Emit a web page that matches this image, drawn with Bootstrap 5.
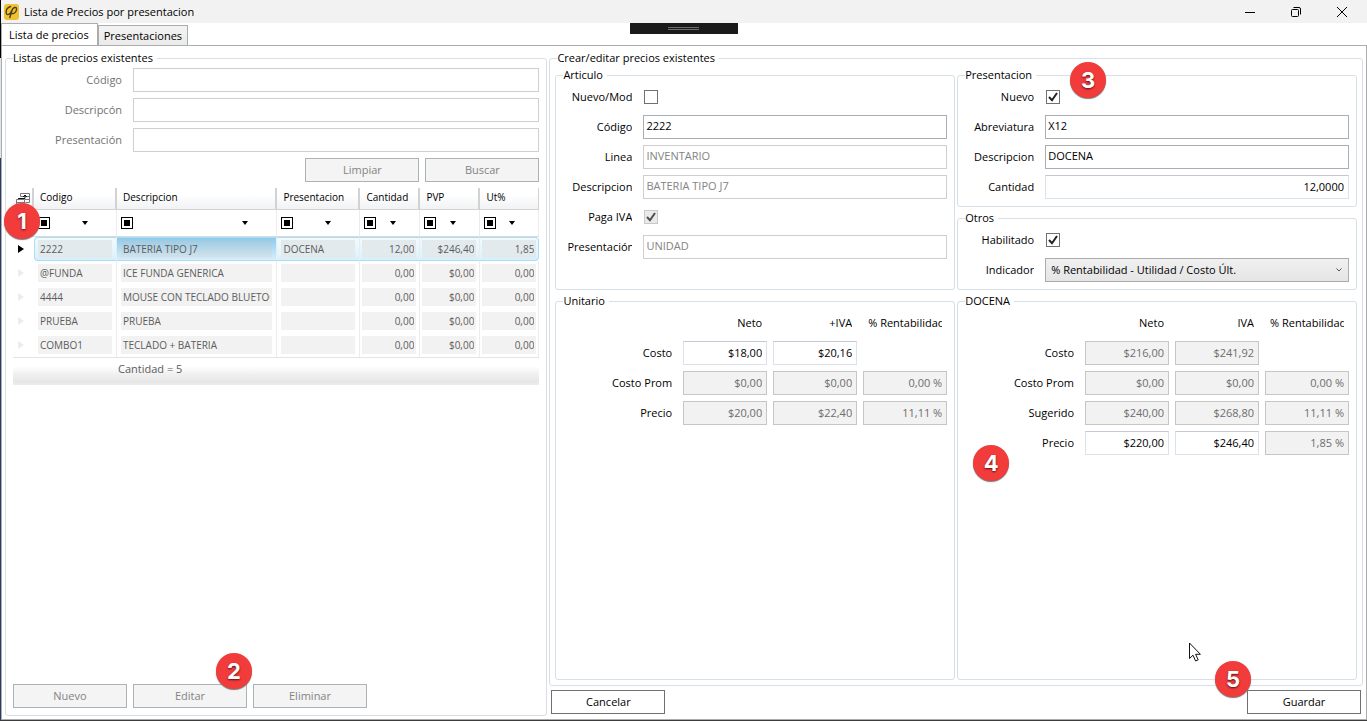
<!DOCTYPE html>
<html lang="es">
<head>
<meta charset="utf-8">
<meta name="viewport" content="width=device-width, initial-scale=1">
<title>Lista de Precios por presentacion</title>
<link href="https://cdn.jsdelivr.net/npm/bootstrap@5.3.0/dist/css/bootstrap.min.css" rel="stylesheet">
<style>
  :root { --ui-font: "Open Sans", "Noto Sans", sans-serif; --edge: #d5dfe5; --line: #acacac; --dim: #838383; }
  body { font: 11px/16px var(--ui-font); color: #000; background: #fff; }
  button, input, select { font: inherit; color: inherit; }

  .window { padding-left: 1px; border-bottom: 1px solid #3c3c3c; background: linear-gradient(#000 8%, #dfe3ec 8% 22%, #2b3a67 22%) left / 1px 100% no-repeat; }
  .title-bar { height: 23px; background: #f2f2f2; padding: 0 2px; }
  .title-bar .app-icon { margin-right: 5px; }
  .win-btn { width: 46px; height: 23px; padding: 0; border: 0; background: none; display: grid; place-items: center; }
  .drag-handle { top: 23px; width: 108px; height: 11px; background: #1a1a1a; }
  .drag-handle span { width: 31px; height: 3px; border: solid #6a6a6a; border-width: 1px 0; }

  .tab-strip { height: 23px; margin-bottom: -1px; }
  .tab-strip .nav-link { padding: 0 5px; color: #000; border: 1px solid var(--line); border-radius: 0; margin: 0; height: 21px; line-height: 20px; background: linear-gradient(#f3f3f3, #ebebeb); }
  .tab-strip .nav-link.active { height: 23px; padding: 0 8px 0 7px; line-height: 22px; background: #fff; border-bottom-color: #fff; }
  .tab-strip .nav-item { display: flex; align-items: flex-end; }

  .frame { border: 1px solid var(--line); padding: 4px 3px 3px; }
  .columns { display: grid; grid-template-columns: minmax(0, 2fr) minmax(0, 3fr); gap: 2px; }
  .pair { display: grid; grid-template-columns: repeat(2, minmax(0, 1fr)); gap: 2px; }
  .stack-3 { display: grid; gap: 3px; }
  .rows-6 { display: grid; gap: 6px; }
  .search { color: #737373; }
  .buttons { display: flex; gap: 6px; }
  .footer-buttons { padding: 4px 2px 2px; }

  .group { border: 1px solid var(--edge); border-radius: 3px; padding: 2px 7px 7px; margin: 0; min-width: 0; position: relative; display: flex; flex-direction: column; }
  .group > legend { float: none; width: auto; font-size: 11px; line-height: 16px; margin: 0; padding: 0 4px 0 0; }
  .outer-right { padding: 1px 5px 5px; }
  .outer-right > legend { margin-left: 2px; }
  .lower { margin-top: 3px; }

  .field { display: grid; grid-template-columns: var(--label, 69px) minmax(0, 1fr); column-gap: 11px; min-height: 24px; align-items: center; }
  .field > label { text-align: right; white-space: nowrap; overflow: hidden; }
  .inner .field > label { margin-left: 4px; }
  .wide { --label: 109px; }
  .box { width: 100%; height: 24px; border: 1px solid #abadb3; background: #fff; padding: 0 2px 4px; border-radius: 0; min-width: 0; display: block; }
  .box:disabled { border-color: #cfcfd1; color: var(--dim); opacity: 1; }
  .money { text-align: right; padding: 0 4px 2px; border-color: #c4c8d4 #dde2ea #dde2ea; }
  .money:disabled { background: #f2f2f2; border-color: #c6c6c6; color: #6d6d6d; }
  .picker { padding: 0 5px; border-color: #acacac; appearance: none;
    background: url("data:image/svg+xml,%3Csvg xmlns='http://www.w3.org/2000/svg' viewBox='0 0 8 6'%3E%3Cpath d='M1.500 1.500l2.500 2.500 2.500-2.500' fill='none' stroke='%23555'/%3E%3C/svg%3E") no-repeat right 5px center / 8px 6px, linear-gradient(#f0f0f0, #e5e5e5); }
  .tick { appearance: none; width: 14px; height: 14px; border: 1px solid #707070; background: #fff; margin: 0 0 0 1px; display: block; }
  .tick:checked { background: url("data:image/svg+xml,%3Csvg xmlns='http://www.w3.org/2000/svg' viewBox='0 0 12 12'%3E%3Cpath d='M2 6l3 3.200L10 2' fill='none' stroke='%23212121' stroke-width='2'/%3E%3C/svg%3E") center / 12px 12px #fff; }
  .tick:disabled { border-color: #bcbcbc; background-color: #e6e6e6; opacity: .8; }

  .flat { width: 114px; height: 24px; padding: 0; border: 1px solid #707070; background: #fff; }
  .flat:disabled { border-color: #adb2b5; background: #f4f4f4; color: var(--dim); }

  .prices { display: grid; grid-template-columns: minmax(0, 1fr) repeat(3, 84px); gap: 6px; align-items: center; text-align: right; }
  .prices > .head, .prices > .skip { height: 24px; line-height: 24px; }
  .prices > .head { margin: 0 5px; white-space: nowrap; overflow: hidden; }
  .prices > label { padding-right: 5px; }

  .listing-wrap { margin-top: 6px; }
  .listing { width: 100%; table-layout: fixed; border-collapse: separate; border-spacing: 0; font-size: 10px; line-height: 16px; }
  .col-mark { width: 21px; }
  .col-text { width: 83px; }
  .col-num { width: 60px; }
  .col-end { width: 59px; }
  .listing th, .listing td { padding: 0; font-weight: 400; }
  .listing thead th { height: 22px; padding: 0 0 3px 6px; border-right: 2px solid #d2d2d2; border-bottom: 1px solid #d2d2d2; background: linear-gradient(#fff 30%, #f1f2f4); white-space: nowrap; }
  .listing thead th:first-child { padding: 0 0 0 2px; }
  .listing thead th:first-child svg { display: block; }
  .listing thead th:last-child { border-right-width: 1px; }
  .listing .filter td { height: 27px; border-right: 1px solid #ececec; border-bottom: 1px solid #d9d9d9; }
  .listing .filter td:not(:first-child) > div { padding: 0 31px 0 4px; display: flex; justify-content: space-between; }
  .listing .filter td.num > div { padding: 0 26px 0 4px; }
  .operator { width: 12px; height: 12px; border: 1px solid #000; padding: 0; background: linear-gradient(#000, #000) center / 6px 6px no-repeat #fff; }
  .drop { width: 7px; height: 12px; border: 0; padding: 0; background: none; display: grid; place-items: center; margin-right: -3px; }
  .drop::before { content: ""; border: 3px solid transparent; border-top: 4px solid #000; border-bottom: 0; }
  .listing .item td { height: 24px; padding: 0 4px; border-right: 1px solid #ececec; }
  .listing .item td.num { padding: 0 3px 0 2px; text-align: right; }
  .listing .item td:last-child { padding-right: 2px; }
  .listing .item td:first-child { padding: 0 0 0 5px; border-right-color: transparent; }
  .cell-text { display: block; height: 18px; line-height: 18px; border: solid transparent; border-width: 0 2px; background: #f2f2f2; color: #5c5c5c; overflow: hidden; white-space: nowrap; }
  .pointer { display: block; border: 4px solid transparent; border-left: 6px solid #ececec; border-right: 0; width: 0; }
  .current .pointer { border-left-color: #000; }
  .listing .current td:not(:first-child) { background: linear-gradient(#f2fafe, #e0f3fd 80%, #d3f0fd); border-top: 1px solid #a9def5; border-bottom: 1px solid #a9def5; }
  .current .cell-text { background: #e3eaee; }
  .listing .current td.focused { background: linear-gradient(#8ccbed, #d7effb); }
  .current .focused .cell-text { background: linear-gradient(#9dcbe3, #d3e4ed); }
  .listing .current td:nth-child(2) { border-left: 1px solid #a9def5; border-radius: 4px 0 0 4px; padding-left: 3px; }
  .listing .current td:last-child { border-right-color: #a9def5; border-radius: 0 4px 4px 0; }
  .listing tfoot td { height: 28px; border-top: 1px solid #e4e4e4; background: linear-gradient(#fff 30%, #f0f0f0 60%, #e6e6e6 90%, #efefef); color: #5c5c5c; font-size: 11px; line-height: 16px; padding: 0 0 5px 105px; }

  .step { position: absolute; z-index: 2; width: 36px; height: 36px; border-radius: 50%; background: #f23b3b; color: #fff; font: 700 22px/36px Inter, sans-serif; text-align: center; box-shadow: 0 1px 1px #777; text-shadow: 0 1px 2px #5a1010; }
  .step-1 { left: -9px; top: 15px; }
  .step-2 { left: 203px; top: -31px; }
  .step-3 { left: 112px; top: -21px; }
  .step-4 { left: 8px; top: 134px; }
  .step-5 { left: -32px; top: -29px; }
  .mouse-arrow { position: absolute; right: 154px; bottom: 16px; }
</style>
</head>
<body>
<div class="window min-vh-100 d-flex flex-column position-relative">
  <header class="title-bar d-flex align-items-center">
    <svg class="app-icon" width="16" height="16" viewBox="0 0 16 16" aria-hidden="true">
      <rect x="1" width="15" height="16" rx="3" fill="#f0c233"/>
      <path d="M7.500 2.500C4.500 3.500 2.800 6.200 3.200 8.800S6 11 7.500 8.800s2-4.800 4-5.300 2.600 1.200 1.600 3.500-3.400 3-4.600 2.300M9.200 6L6.800 13.500" fill="none" stroke="#4a3f1c" stroke-width="1.400" stroke-linecap="round"/>
    </svg>
    <span class="me-auto">Lista de Precios por presentacion</span>
    <button class="win-btn" type="button" aria-label="Minimizar"><svg width="12" height="12" viewBox="0 0 12 12"><path d="M1 6.500h10" stroke="#000"/></svg></button>
    <button class="win-btn" type="button" aria-label="Restaurar"><svg width="12" height="12" viewBox="0 0 12 12" fill="none" stroke="#000"><rect x="1.500" y="3.500" width="7" height="7" rx="1"/><path d="M3.500 1.500H9a1.500 1.500 0 0 1 1.500 1.500v5.500"/></svg></button>
    <button class="win-btn" type="button" aria-label="Cerrar"><svg width="12" height="12" viewBox="0 0 12 12"><path d="M1 1l10 10M11 1L1 11" stroke="#000"/></svg></button>
  </header>
  <div class="drag-handle position-absolute start-50 translate-middle-x d-flex align-items-center justify-content-center"><span></span></div>

  <ul class="nav tab-strip align-items-end flex-nowrap">
    <li class="nav-item"><a class="nav-link active" href="#lista" aria-current="page">Lista de precios</a></li>
    <li class="nav-item"><a class="nav-link" href="#presentaciones">Presentaciones</a></li>
  </ul>

  <main class="frame flex-grow-1 d-flex flex-column" id="lista">
    <div class="columns flex-grow-1">

      <fieldset class="group">
        <legend>Listas de precios existentes</legend>
        <div class="rows-6 wide search">
          <div class="field"><label for="b-cod">Código</label><input class="box" id="b-cod" disabled></div>
          <div class="field"><label for="b-des">Descripcón</label><input class="box" id="b-des" disabled></div>
          <div class="field"><label for="b-pre">Presentación</label><input class="box" id="b-pre" disabled></div>
          <div class="buttons justify-content-end"><button class="flat" type="button" disabled>Limpiar</button><button class="flat" type="button" disabled>Buscar</button></div>
        </div>

        <div class="position-relative listing-wrap">
          <table class="listing">
            <colgroup><col class="col-mark"><col class="col-text"><col><col class="col-text"><col class="col-num"><col class="col-num"><col class="col-end"></colgroup>
            <thead>
              <tr>
                <th aria-label="Selector"><svg width="16" height="14" viewBox="0 0 16 14" fill="none" stroke="#777"><path d="M5.500 1.500h9v9h-4M5.500 4.500v-3M5.500 4.500h9M10 7.500h4.500M1.500 7.500h8v6h-8zM1.500 10.500h8"/><path d="M3 6.500h7V3M8 5l2-2 2 2" stroke="#111"/></svg></th>
                <th>Codigo</th><th>Descripcion</th><th>Presentacion</th><th>Cantidad</th><th>PVP</th><th>Ut%</th>
              </tr>
              <tr class="filter">
                <td></td>
                <td><div><button class="operator" type="button" aria-label="Operador"></button><button class="drop" type="button" aria-label="Filtrar Codigo"></button></div></td>
                <td><div><button class="operator" type="button" aria-label="Operador"></button><button class="drop" type="button" aria-label="Filtrar Descripcion"></button></div></td>
                <td><div><button class="operator" type="button" aria-label="Operador"></button><button class="drop" type="button" aria-label="Filtrar Presentacion"></button></div></td>
                <td class="num"><div><button class="operator" type="button" aria-label="Operador"></button><button class="drop" type="button" aria-label="Filtrar Cantidad"></button></div></td>
                <td class="num"><div><button class="operator" type="button" aria-label="Operador"></button><button class="drop" type="button" aria-label="Filtrar PVP"></button></div></td>
                <td class="num"><div><button class="operator" type="button" aria-label="Operador"></button><button class="drop" type="button" aria-label="Filtrar Ut%"></button></div></td>
              </tr>
            </thead>
            <tbody>
              <tr class="item current"><td><span class="pointer"></span></td><td><span class="cell-text">2222</span></td><td class="focused"><span class="cell-text">BATERIA TIPO J7</span></td><td><span class="cell-text">DOCENA</span></td><td class="num"><span class="cell-text">12,00</span></td><td class="num"><span class="cell-text">$246,40</span></td><td class="num"><span class="cell-text">1,85</span></td></tr>
              <tr class="item"><td><span class="pointer"></span></td><td><span class="cell-text">@FUNDA</span></td><td><span class="cell-text">ICE FUNDA GENERICA</span></td><td><span class="cell-text"></span></td><td class="num"><span class="cell-text">0,00</span></td><td class="num"><span class="cell-text">$0,00</span></td><td class="num"><span class="cell-text">0,00</span></td></tr>
              <tr class="item"><td><span class="pointer"></span></td><td><span class="cell-text">4444</span></td><td><span class="cell-text">MOUSE CON TECLADO BLUETOOTH</span></td><td><span class="cell-text"></span></td><td class="num"><span class="cell-text">0,00</span></td><td class="num"><span class="cell-text">$0,00</span></td><td class="num"><span class="cell-text">0,00</span></td></tr>
              <tr class="item"><td><span class="pointer"></span></td><td><span class="cell-text">PRUEBA</span></td><td><span class="cell-text">PRUEBA</span></td><td><span class="cell-text"></span></td><td class="num"><span class="cell-text">0,00</span></td><td class="num"><span class="cell-text">$0,00</span></td><td class="num"><span class="cell-text">0,00</span></td></tr>
              <tr class="item"><td><span class="pointer"></span></td><td><span class="cell-text">COMBO1</span></td><td><span class="cell-text">TECLADO + BATERIA</span></td><td><span class="cell-text"></span></td><td class="num"><span class="cell-text">0,00</span></td><td class="num"><span class="cell-text">$0,00</span></td><td class="num"><span class="cell-text">0,00</span></td></tr>
            </tbody>
            <tfoot><tr><td colspan="7">Cantidad = 5</td></tr></tfoot>
          </table>
          <span class="step step-1">1</span>
        </div>

        <div class="position-relative buttons mt-auto">
          <button class="flat" type="button" disabled>Nuevo</button>
          <button class="flat" type="button" disabled>Editar</button>
          <button class="flat" type="button" disabled>Eliminar</button>
          <span class="step step-2">2</span>
        </div>
      </fieldset>

      <div class="d-flex flex-column">
        <fieldset class="group outer-right flex-grow-1">
          <legend>Crear/editar precios existentes</legend>
          <div class="pair">
            <fieldset class="group inner">
              <legend>Articulo</legend>
              <div class="rows-6">
                <div class="field"><label for="a-nue">Nuevo/Mod</label><input class="tick" type="checkbox" id="a-nue"></div>
                <div class="field"><label for="a-cod">Código</label><input class="box" id="a-cod" value="2222"></div>
                <div class="field"><label for="a-lin">Linea</label><input class="box" id="a-lin" value="INVENTARIO" disabled></div>
                <div class="field"><label for="a-des">Descripcion</label><input class="box" id="a-des" value="BATERIA TIPO J7" disabled></div>
                <div class="field"><label for="a-iva">Paga IVA</label><input class="tick" type="checkbox" id="a-iva" checked disabled></div>
                <div class="field"><label for="a-pre">Presentación</label><input class="box" id="a-pre" value="UNIDAD" disabled></div>
              </div>
            </fieldset>
            <div class="stack-3">
              <fieldset class="group inner">
                <legend>Presentacion</legend>
                <div class="rows-6">
                  <div class="field"><label for="p-nue">Nuevo</label><input class="tick" type="checkbox" id="p-nue" checked></div>
                  <div class="field"><label for="p-abr">Abreviatura</label><input class="box" id="p-abr" value="X12"></div>
                  <div class="field"><label for="p-des">Descripcion</label><input class="box" id="p-des" value="DOCENA"></div>
                  <div class="field"><label for="p-can">Cantidad</label><input class="box money" id="p-can" value="12,0000"></div>
                </div>
                <span class="step step-3">3</span>
              </fieldset>
              <fieldset class="group inner">
                <legend>Otros</legend>
                <div class="rows-6">
                  <div class="field"><label for="o-hab">Habilitado</label><input class="tick" type="checkbox" id="o-hab" checked></div>
                  <div class="field"><label for="o-ind">Indicador</label><select class="box picker" id="o-ind"><option>% Rentabilidad - Utilidad / Costo Últ.</option></select></div>
                </div>
              </fieldset>
            </div>
          </div>

          <div class="pair lower flex-grow-1">
            <fieldset class="group inner">
              <legend>Unitario</legend>
              <div class="prices">
                <span class="skip"></span><span class="head">Neto</span><span class="head">+IVA</span><span class="head">% Rentabilidad</span>
                <label for="u-c1">Costo</label><input class="box money" id="u-c1" value="$18,00"><input class="box money" aria-label="Costo +IVA" value="$20,16"><span class="skip"></span>
                <label for="u-m1">Costo Prom</label><input class="box money" id="u-m1" value="$0,00" disabled><input class="box money" aria-label="Costo Prom +IVA" value="$0,00" disabled><input class="box money" aria-label="Costo Prom rentabilidad" value="0,00 %" disabled>
                <label for="u-p1">Precio</label><input class="box money" id="u-p1" value="$20,00" disabled><input class="box money" aria-label="Precio +IVA" value="$22,40" disabled><input class="box money" aria-label="Precio rentabilidad" value="11,11 %" disabled>
              </div>
            </fieldset>
            <fieldset class="group inner">
              <legend>DOCENA</legend>
              <div class="prices position-relative">
                <span class="skip"></span><span class="head">Neto</span><span class="head">IVA</span><span class="head">% Rentabilidad</span>
                <label for="d-c1">Costo</label><input class="box money" id="d-c1" value="$216,00" disabled><input class="box money" aria-label="Costo IVA" value="$241,92" disabled><span class="skip"></span>
                <label for="d-m1">Costo Prom</label><input class="box money" id="d-m1" value="$0,00" disabled><input class="box money" aria-label="Costo Prom IVA" value="$0,00" disabled><input class="box money" aria-label="Costo Prom rentabilidad" value="0,00 %" disabled>
                <label for="d-s1">Sugerido</label><input class="box money" id="d-s1" value="$240,00" disabled><input class="box money" aria-label="Sugerido IVA" value="$268,80" disabled><input class="box money" aria-label="Sugerido rentabilidad" value="11,11 %" disabled>
                <label for="d-p1">Precio</label><input class="box money" id="d-p1" value="$220,00"><input class="box money" aria-label="Precio IVA" value="$246,40"><input class="box money" aria-label="Precio rentabilidad" value="1,85 %" disabled>
                <span class="step step-4">4</span>
              </div>
              <svg class="mouse-arrow" width="14" height="21" viewBox="0 0 14 21" aria-hidden="true"><path d="M1.500 1v15.500l3.500-3.300 2.600 5.800 2.600-1.200-2.600-5.500h4.800z" fill="#fff" stroke="#111"/></svg>
            </fieldset>
          </div>
        </fieldset>
        <div class="footer-buttons d-flex justify-content-between">
          <button class="flat" type="button">Cancelar</button>
          <div class="position-relative"><button class="flat d-block" type="button">Guardar</button><span class="step step-5">5</span></div>
        </div>
      </div>
    </div>
  </main>
</div>
<script src="https://cdn.jsdelivr.net/npm/bootstrap@5.3.0/dist/js/bootstrap.bundle.min.js"></script>
</body>
</html>
